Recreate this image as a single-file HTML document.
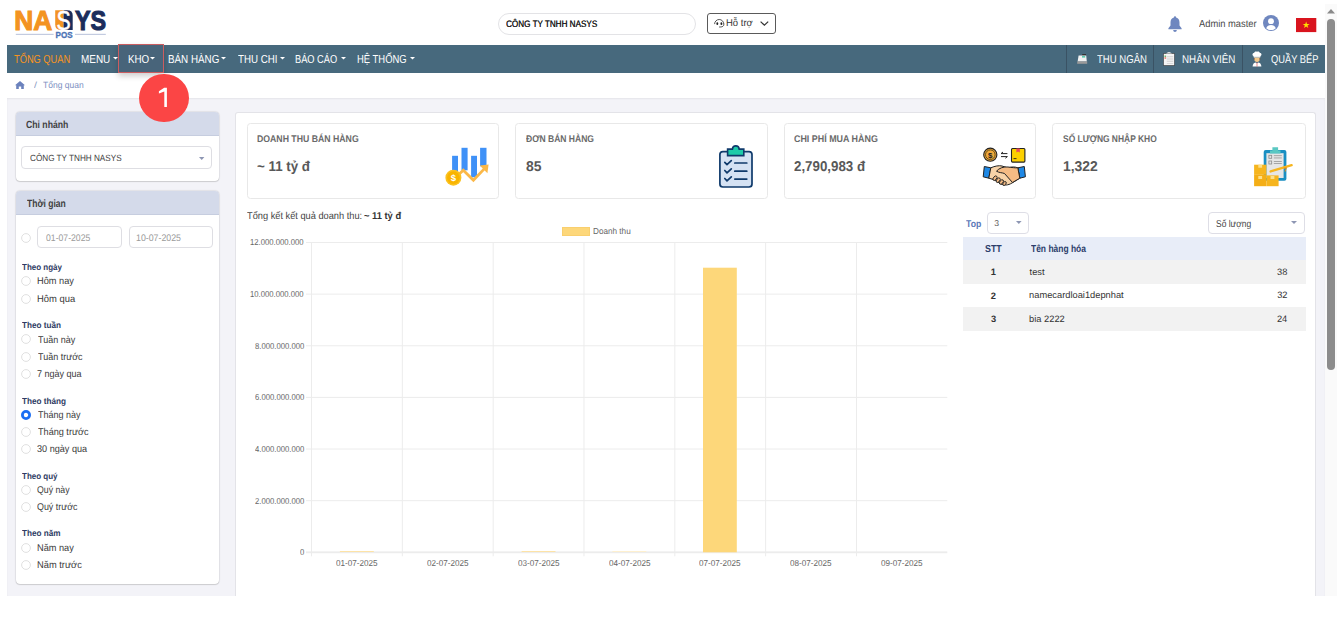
<!DOCTYPE html>
<html><head><meta charset="utf-8"><style>
html,body{margin:0;padding:0;}
body{width:1341px;height:625px;overflow:hidden;position:relative;background:#fff;font-family:"Liberation Sans",sans-serif;}
.t{position:absolute;white-space:nowrap;line-height:1;transform-origin:0 0;text-rendering:geometricPrecision;}
.r{position:absolute;box-sizing:border-box;}
svg{position:absolute;overflow:visible;}
</style></head><body>
<div class="r" style="left:7.00px;top:98.00px;width:1318.00px;height:498.00px;background:#f3f3f8;box-shadow:inset 0 1px 2px rgba(0,0,0,0.06)"></div>
<div class="r" style="left:7.00px;top:45.00px;width:1318.00px;height:28.00px;background:#47697d"></div>
<div class="r" style="left:1325.00px;top:4.00px;width:12.00px;height:592.00px;background:#fafafa"></div>
<svg style="left:1327px;top:8.6px" width="8" height="5"><path d="M0 4.5 L4 0 L8 4.5Z" fill="#8a8a8a"/></svg>
<div class="r" style="left:1327.00px;top:18.50px;width:8.00px;height:351.50px;background:#8c8c8c;border-radius:4px"></div>
<svg style="left:0;top:0" width="120" height="42">
<text x="14.2" y="29.9" font-family="Liberation Sans" font-weight="700" font-size="28.3" fill="#f39322" stroke="#f39322" stroke-width="1.1" textLength="38" lengthAdjust="spacingAndGlyphs">NA</text>
<path d="M55.2 10.2 H63.6 V30 H60.6 Q55.2 30 55.2 24.6 Z" fill="#f39322"/>
<path d="M63.6 10.2 H67.3 Q72.7 10.2 72.7 15.6 V30 H63.6 Z" fill="#1b2d5c"/>
<text x="56.6" y="29.9" font-family="Liberation Sans" font-weight="400" font-size="27.8" fill="#fff" stroke="#fff" stroke-width="0.5" textLength="14.2" lengthAdjust="spacingAndGlyphs">S</text>
<text x="74.9" y="29.9" font-family="Liberation Sans" font-weight="700" font-size="28.3" fill="#1b2d5c" stroke="#1b2d5c" stroke-width="1.1" textLength="31.2" lengthAdjust="spacingAndGlyphs">YS</text>
<rect x="15.8" y="33.8" width="37.8" height="1.2" fill="#c3cbe0"/>
<rect x="75" y="33.8" width="30.8" height="1.2" fill="#c3cbe0"/>
<text x="55.6" y="38.1" font-family="Liberation Sans" font-weight="700" font-size="8.6" fill="#4a72b5" stroke="#4a72b5" stroke-width="0.3" textLength="17" lengthAdjust="spacingAndGlyphs">POS</text>
</svg>
<div class="r" style="left:498.00px;top:13.30px;width:198.40px;height:21.30px;border:1px solid #e3e3e6;border-radius:11px;background:#fff"></div>
<div class="t" style="left:506.09px;top:19px;font-size:9.40px;font-weight:400;color:#1e1e1e;transform:scaleX(0.8660);text-shadow:0.2px 0 0 #1e1e1e;">CÔNG TY TNHH NASYS</div>
<div class="r" style="left:707.00px;top:13.00px;width:68.80px;height:20.50px;border:1.3px solid #5a5a5a;border-radius:3px;background:#fff"></div>
<svg style="left:713px;top:16.5px" width="13" height="12" viewBox="713 16.5 13 12">
<path d="M714.6 23.6 A4.6 4.6 0 1 1 723.8 23.6" fill="none" stroke="#444" stroke-width="0.9"/>
<ellipse cx="717.3" cy="23.2" rx="0.95" ry="1.35" fill="#222"/>
<ellipse cx="721.4" cy="23.2" rx="0.95" ry="1.35" fill="#222"/>
<path d="M723.8 23.3 C723.9 25.6 723 26.5 719.2 26.5" fill="none" stroke="#333" stroke-width="0.9"/>
</svg>
<div class="t" style="left:726.24px;top:19px;font-size:10.00px;font-weight:400;color:#333;transform:scaleX(0.9483);">Hỗ trợ</div>
<svg style="left:759.5px;top:20.8px" width="9" height="5"><path d="M0.6 0.6 L4.4 4.2 L8.2 0.6" fill="none" stroke="#333" stroke-width="1.2"/></svg>
<svg style="left:1168px;top:15.8px" width="14" height="16" viewBox="0 0 14 16">
<path d="M7 0.3 C7.8 0.3 8.1 0.9 8.1 1.5 C10.5 2.1 11.5 4 11.5 6.5 L11.5 9.5 L13.6 12.3 L13.6 13.2 L0.4 13.2 L0.4 12.3 L2.5 9.5 L2.5 6.5 C2.5 4 3.5 2.1 5.9 1.5 C5.9 0.9 6.2 0.3 7 0.3Z M5.2 14 L8.8 14 C8.8 15.1 8 16 7 16 C6 16 5.2 15.1 5.2 14Z" fill="#6f87bf"/>
</svg>
<div class="t" style="left:1198.80px;top:20px;font-size:10.15px;font-weight:400;color:#4a4a4a;transform:scaleX(0.9227);">Admin master</div>
<svg style="left:1262.6px;top:15.4px" width="16" height="16" viewBox="0 0 16 16">
<circle cx="8" cy="8" r="8" fill="#6f87bf"/>
<circle cx="8" cy="6.2" r="2.9" fill="#fff"/>
<path d="M3.2 13.2 C4 10.8 5.8 10 8 10 C10.2 10 12 10.8 12.8 13.2 C11.5 14.5 9.8 15 8 15 C6.2 15 4.5 14.5 3.2 13.2Z" fill="#fff"/>
</svg>
<svg style="left:1295.8px;top:17.8px" width="20.3" height="14.1" viewBox="0 0 20.3 14.1">
<rect width="20.3" height="14.1" fill="#d9141e"/>
<path d="M10.15 3.6 L11 6.1 L13.6 6.1 L11.5 7.6 L12.3 10.1 L10.15 8.6 L8 10.1 L8.8 7.6 L6.7 6.1 L9.3 6.1Z" fill="#ffde00"/>
</svg>
<div class="r" style="left:117.90px;top:43.60px;width:45.70px;height:29.90px;background:#48647a;border:1px solid rgba(226,92,92,0.85);box-shadow:0 3px 6px rgba(0,0,0,0.2)"></div>
<div class="t" style="left:13.71px;top:54px;font-size:11.64px;font-weight:400;color:#f7941d;transform:scaleX(0.7978);">TỔNG QUAN</div>
<div class="t" style="left:80.50px;top:54px;font-size:11.64px;font-weight:400;color:#ffffff;transform:scaleX(0.8545);">MENU</div>
<svg style="left:113px;top:57.4px" width="5" height="2.5"><path d="M0 0 L5 0 L2.5 2.5Z" fill="#fff"/></svg>
<div class="t" style="left:127.92px;top:54px;font-size:11.64px;font-weight:400;color:#ffffff;transform:scaleX(0.8423);">KHO</div>
<svg style="left:150.2px;top:57.4px" width="5" height="2.5"><path d="M0 0 L5 0 L2.5 2.5Z" fill="#fff"/></svg>
<div class="t" style="left:167.71px;top:54px;font-size:11.64px;font-weight:400;color:#ffffff;transform:scaleX(0.8456);">BÁN HÀNG</div>
<svg style="left:221.4px;top:57.4px" width="5" height="2.5"><path d="M0 0 L5 0 L2.5 2.5Z" fill="#fff"/></svg>
<div class="t" style="left:237.81px;top:54px;font-size:11.64px;font-weight:400;color:#ffffff;transform:scaleX(0.8373);">THU CHI</div>
<svg style="left:280.2px;top:57.4px" width="5" height="2.5"><path d="M0 0 L5 0 L2.5 2.5Z" fill="#fff"/></svg>
<div class="t" style="left:295.26px;top:54px;font-size:11.64px;font-weight:400;color:#ffffff;transform:scaleX(0.7951);">BÁO CÁO</div>
<svg style="left:341.2px;top:57.4px" width="5" height="2.5"><path d="M0 0 L5 0 L2.5 2.5Z" fill="#fff"/></svg>
<div class="t" style="left:356.54px;top:54px;font-size:11.64px;font-weight:400;color:#ffffff;transform:scaleX(0.8128);">HỆ THỐNG</div>
<svg style="left:410.2px;top:57.4px" width="5" height="2.5"><path d="M0 0 L5 0 L2.5 2.5Z" fill="#fff"/></svg>
<div class="r" style="left:1066.00px;top:45.00px;width:1.20px;height:28.00px;background:#3a5264"></div>
<div class="r" style="left:1153.00px;top:45.00px;width:1.20px;height:28.00px;background:#3a5264"></div>
<div class="r" style="left:1242.00px;top:45.00px;width:1.20px;height:28.00px;background:#3a5264"></div>
<svg style="left:1077px;top:54px" width="10.5" height="10" viewBox="0 0 10.5 10">
<rect x="5.2" y="0" width="3.8" height="1.6" fill="#333"/>
<path d="M1.6 1.4 L9.2 1.4 L9.8 7.4 L0.6 7.4Z" fill="#f2f2f2"/>
<rect x="5" y="2.2" width="3.2" height="1.3" fill="#3cc2a0"/>
<rect x="0.2" y="7.4" width="10" height="2.4" fill="#9a9a9a"/>
</svg>
<div class="t" style="left:1096.81px;top:55px;font-size:11.34px;font-weight:400;color:#ffffff;transform:scaleX(0.8439);">THU NGÂN</div>
<svg style="left:1162.5px;top:51.4px" width="12" height="15" viewBox="0 0 12 15">
<path d="M0.3 2.2 L11.7 2.2 L11.7 14.8 L0.3 14.8Z" fill="#3c3c3c"/>
<path d="M0.8 2.8 L11.2 2.8 L11.2 14.2 L0.8 14.2Z" fill="#f4f4f4"/>
<path d="M3 2.6 Q6 -0.6 9 2.6Z" fill="#e8e8e8"/>
<rect x="1.5" y="4.6" width="1.6" height="1.2" fill="#4caf50"/>
<rect x="1.5" y="6.4" width="1.6" height="1.2" fill="#e74c3c"/>
<g fill="#c8c8c8"><rect x="3.8" y="5" width="6.4" height="0.6"/><rect x="3.8" y="6.8" width="6.4" height="0.6"/><rect x="3.8" y="8.6" width="6.4" height="0.6"/><rect x="3.8" y="10.4" width="6.4" height="0.6"/><rect x="3.8" y="12.2" width="6.4" height="0.6"/></g>
</svg>
<div class="t" style="left:1182.42px;top:55px;font-size:11.34px;font-weight:400;color:#ffffff;transform:scaleX(0.8643);">NHÂN VIÊN</div>
<svg style="left:1251.8px;top:51.2px" width="10" height="16" viewBox="0 0 10 16">
<path d="M1.5 5 C0 4.5 0.2 2 2 2 C2.5 0.3 4 0 5 0.8 C6 0 7.5 0.3 8 2 C9.8 2 10 4.5 8.5 5 L8.3 6 L1.7 6Z" fill="#fff"/>
<rect x="1.8" y="5.6" width="6.4" height="1.1" fill="#ddd"/>
<path d="M2.3 6.7 L7.7 6.7 L7.7 8.6 C7.7 10.2 6.5 11 5 11 C3.5 11 2.3 10.2 2.3 8.6Z" fill="#f3c98b"/>
<path d="M1.8 7 L2.4 7 L2.4 9 L1.8 8.5Z M8.2 7 L7.6 7 L7.6 9 L8.2 8.5Z" fill="#8b4a2b"/>
<path d="M0.6 15.6 C0.6 12.8 2.2 11.6 4 11.4 L5 12.4 L6 11.4 C7.8 11.6 9.4 12.8 9.4 15.6Z" fill="#fff"/>
<rect x="4.7" y="11.6" width="0.6" height="4" fill="#d44"/>
</svg>
<div class="t" style="left:1270.98px;top:55px;font-size:11.34px;font-weight:400;color:#ffffff;transform:scaleX(0.8219);">QUẦY BẾP</div>
<svg style="left:15px;top:81px" width="10" height="8" viewBox="0 0 10 8">
<path d="M5 0 L10 4.3 L8.8 4.3 L8.8 8 L6.2 8 L6.2 5.6 L3.8 5.6 L3.8 8 L1.2 8 L1.2 4.3 L0 4.3Z" fill="#6b82bd"/>
</svg>
<div class="t" style="left:33.70px;top:81px;font-size:8.96px;font-weight:400;color:#8e9bc0;transform:scaleX(1.1958);">/</div>
<div class="t" style="left:42.83px;top:81px;font-size:8.96px;font-weight:400;color:#7d90c2;transform:scaleX(0.9485);">Tổng quan</div>
<div class="r" style="left:15.70px;top:112.00px;width:202.90px;height:68.50px;background:#fff;border-radius:4px;box-shadow:0 0 1.5px rgba(0,0,0,0.32),0 1px 1px rgba(0,0,0,0.1)"></div>
<div class="r" style="left:15.70px;top:112.00px;width:202.90px;height:24.40px;background:#d4daea;border-radius:4px 4px 0 0;border-bottom:1px solid #c6cddf"></div>
<div class="t" style="left:26.35px;top:121px;font-size:10.30px;font-weight:700;color:#3f3f3f;transform:scaleX(0.8420);">Chi nhánh</div>
<div class="r" style="left:21.40px;top:146.30px;width:191.10px;height:23.00px;border:1px solid #dedee3;border-radius:4px;background:#fff"></div>
<div class="t" style="left:29.59px;top:154px;font-size:9.03px;font-weight:400;color:#444;transform:scaleX(0.9054);">CÔNG TY TNHH NASYS</div>
<svg style="left:198.6px;top:157px" width="5.4" height="3"><path d="M0 0 L5.4 0 L2.7 3Z" fill="#8d96b3"/></svg>
<div class="r" style="left:15.70px;top:191.20px;width:202.90px;height:393.30px;background:#fff;border-radius:4px;box-shadow:0 0 1.5px rgba(0,0,0,0.32),0 1px 1px rgba(0,0,0,0.1)"></div>
<div class="r" style="left:15.70px;top:191.20px;width:202.90px;height:23.60px;background:#d4daea;border-radius:4px 4px 0 0;border-bottom:1px solid #c6cddf"></div>
<div class="t" style="left:27.11px;top:199px;font-size:10.60px;font-weight:700;color:#3f3f3f;transform:scaleX(0.8053);">Thời gian</div>
<svg style="left:21px;top:232.50px" width="10" height="10"><circle cx="5" cy="5" r="4.4" fill="#fff" stroke="#dcdcdc" stroke-width="0.9"/></svg>
<div class="r" style="left:37.40px;top:226.10px;width:84.20px;height:22.40px;border:1px solid #dedee3;border-radius:4px;background:#fff"></div>
<div class="r" style="left:128.50px;top:226.10px;width:84.20px;height:22.40px;border:1px solid #dedee3;border-radius:4px;background:#fff"></div>
<div class="t" style="left:45.65px;top:234px;font-size:9.55px;font-weight:400;color:#9a9a9a;transform:scaleX(0.9067);">01-07-2025</div>
<div class="t" style="left:136.34px;top:234px;font-size:9.55px;font-weight:400;color:#9a9a9a;transform:scaleX(0.9215);">10-07-2025</div>
<div class="t" style="left:21.62px;top:263px;font-size:8.66px;font-weight:700;color:#2e3b63;transform:scaleX(0.9243);">Theo ngày</div>
<svg style="left:21px;top:276.00px" width="10" height="10"><circle cx="5" cy="5" r="4.4" fill="#fff" stroke="#dcdcdc" stroke-width="0.9"/></svg>
<div class="t" style="left:37.06px;top:277px;font-size:9.85px;font-weight:400;color:#3a3a3a;transform:scaleX(0.9375);">Hôm nay</div>
<svg style="left:21px;top:293.80px" width="10" height="10"><circle cx="5" cy="5" r="4.4" fill="#fff" stroke="#dcdcdc" stroke-width="0.9"/></svg>
<div class="t" style="left:37.05px;top:295px;font-size:9.85px;font-weight:400;color:#3a3a3a;transform:scaleX(0.9552);">Hôm qua</div>
<div class="t" style="left:21.62px;top:321px;font-size:8.66px;font-weight:700;color:#2e3b63;transform:scaleX(0.9400);">Theo tuần</div>
<svg style="left:21px;top:334.30px" width="10" height="10"><circle cx="5" cy="5" r="4.4" fill="#fff" stroke="#dcdcdc" stroke-width="0.9"/></svg>
<div class="t" style="left:37.62px;top:336px;font-size:9.85px;font-weight:400;color:#3a3a3a;transform:scaleX(0.9140);">Tuần này</div>
<svg style="left:21px;top:351.80px" width="10" height="10"><circle cx="5" cy="5" r="4.4" fill="#fff" stroke="#dcdcdc" stroke-width="0.9"/></svg>
<div class="t" style="left:37.62px;top:353px;font-size:9.85px;font-weight:400;color:#3a3a3a;transform:scaleX(0.9139);">Tuần trước</div>
<svg style="left:21px;top:369.10px" width="10" height="10"><circle cx="5" cy="5" r="4.4" fill="#fff" stroke="#dcdcdc" stroke-width="0.9"/></svg>
<div class="t" style="left:37.35px;top:370px;font-size:9.85px;font-weight:400;color:#3a3a3a;transform:scaleX(0.9158);">7 ngày qua</div>
<div class="t" style="left:21.62px;top:397px;font-size:8.66px;font-weight:700;color:#2e3b63;transform:scaleX(0.9451);">Theo tháng</div>
<svg style="left:21px;top:410.00px" width="10" height="10"><circle cx="5" cy="5" r="3.6" fill="#fff" stroke="#1b6ef3" stroke-width="2.8"/></svg>
<div class="t" style="left:37.62px;top:411px;font-size:9.85px;font-weight:400;color:#3a3a3a;transform:scaleX(0.9127);">Tháng này</div>
<svg style="left:21px;top:427.00px" width="10" height="10"><circle cx="5" cy="5" r="4.4" fill="#fff" stroke="#dcdcdc" stroke-width="0.9"/></svg>
<div class="t" style="left:37.62px;top:428px;font-size:9.85px;font-weight:400;color:#3a3a3a;transform:scaleX(0.9258);">Tháng trước</div>
<svg style="left:21px;top:443.80px" width="10" height="10"><circle cx="5" cy="5" r="4.4" fill="#fff" stroke="#dcdcdc" stroke-width="0.9"/></svg>
<div class="t" style="left:37.44px;top:445px;font-size:9.85px;font-weight:400;color:#3a3a3a;transform:scaleX(0.9251);">30 ngày qua</div>
<div class="t" style="left:21.62px;top:472px;font-size:8.66px;font-weight:700;color:#2e3b63;transform:scaleX(0.9227);">Theo quý</div>
<svg style="left:21px;top:484.70px" width="10" height="10"><circle cx="5" cy="5" r="4.4" fill="#fff" stroke="#dcdcdc" stroke-width="0.9"/></svg>
<div class="t" style="left:37.41px;top:486px;font-size:9.85px;font-weight:400;color:#3a3a3a;transform:scaleX(0.8883);">Quý này</div>
<svg style="left:21px;top:502.00px" width="10" height="10"><circle cx="5" cy="5" r="4.4" fill="#fff" stroke="#dcdcdc" stroke-width="0.9"/></svg>
<div class="t" style="left:37.40px;top:503px;font-size:9.85px;font-weight:400;color:#3a3a3a;transform:scaleX(0.9042);">Quý trước</div>
<div class="t" style="left:21.62px;top:529px;font-size:8.66px;font-weight:700;color:#2e3b63;transform:scaleX(0.9426);">Theo năm</div>
<svg style="left:21px;top:542.50px" width="10" height="10"><circle cx="5" cy="5" r="4.4" fill="#fff" stroke="#dcdcdc" stroke-width="0.9"/></svg>
<div class="t" style="left:37.06px;top:544px;font-size:9.85px;font-weight:400;color:#3a3a3a;transform:scaleX(0.9349);">Năm nay</div>
<svg style="left:21px;top:559.80px" width="10" height="10"><circle cx="5" cy="5" r="4.4" fill="#fff" stroke="#dcdcdc" stroke-width="0.9"/></svg>
<div class="t" style="left:37.06px;top:561px;font-size:9.85px;font-weight:400;color:#3a3a3a;transform:scaleX(0.9442);">Năm trước</div>
<div class="r" style="left:235.00px;top:112.00px;width:1081.00px;height:484.00px;background:#fff;border:1px solid #e3e3e8;border-bottom:none;border-radius:3px 3px 0 0"></div>
<div class="r" style="left:247.00px;top:123.00px;width:252.00px;height:76.00px;border:1px solid #e8e8e8;border-radius:3.5px;background:#fff"></div>
<div class="t" style="left:256.53px;top:135px;font-size:9.70px;font-weight:700;color:#6a6a6a;transform:scaleX(0.8996);">DOANH THU BÁN HÀNG</div>
<div class="t" style="left:256.57px;top:160px;font-size:14.18px;font-weight:700;color:#585858;transform:scaleX(0.9403);">~ 11 tỷ đ</div>
<div class="r" style="left:515.00px;top:123.00px;width:253.00px;height:76.00px;border:1px solid #e8e8e8;border-radius:3.5px;background:#fff"></div>
<div class="t" style="left:526.06px;top:135px;font-size:9.70px;font-weight:700;color:#6a6a6a;transform:scaleX(0.8814);">ĐƠN BÁN HÀNG</div>
<div class="t" style="left:525.68px;top:160px;font-size:14.18px;font-weight:700;color:#585858;transform:scaleX(0.9826);">85</div>
<div class="r" style="left:784.00px;top:123.00px;width:252.00px;height:76.00px;border:1px solid #e8e8e8;border-radius:3.5px;background:#fff"></div>
<div class="t" style="left:794.34px;top:135px;font-size:9.70px;font-weight:700;color:#6a6a6a;transform:scaleX(0.9196);">CHI PHÍ MUA HÀNG</div>
<div class="t" style="left:794.23px;top:160px;font-size:14.18px;font-weight:700;color:#585858;transform:scaleX(0.9390);">2,790,983 đ</div>
<div class="r" style="left:1052.00px;top:123.00px;width:254.00px;height:76.00px;border:1px solid #e8e8e8;border-radius:3.5px;background:#fff"></div>
<div class="t" style="left:1063.35px;top:135px;font-size:9.70px;font-weight:700;color:#6a6a6a;transform:scaleX(0.8707);">SỐ LƯỢNG NHẬP KHO</div>
<div class="t" style="left:1062.76px;top:160px;font-size:14.18px;font-weight:700;color:#585858;transform:scaleX(0.9814);">1,322</div>
<div class="t" style="left:246.82px;top:212px;font-size:10.00px;font-weight:400;color:#444;transform:scaleX(0.9246);">Tổng kết kết quả doanh thu:</div>
<div class="t" style="left:363.63px;top:212px;font-size:10.00px;font-weight:700;color:#333;transform:scaleX(0.9338);">~ 11 tỷ đ</div>
<div class="r" style="left:562.40px;top:227.30px;width:27.50px;height:8.60px;background:#fdd77a;border:1px solid #f9cf6e"></div>
<div class="t" style="left:593.15px;top:227px;font-size:8.66px;font-weight:400;color:#666;transform:scaleX(0.9429);">Doanh thu</div>
<svg style="left:0;top:0" width="1341" height="625"><rect x="306" y="242.00" width="641.30" height="1" fill="#ececec"/><rect x="306" y="293.63" width="641.30" height="1" fill="#ececec"/><rect x="306" y="345.27" width="641.30" height="1" fill="#ececec"/><rect x="306" y="396.90" width="641.30" height="1" fill="#ececec"/><rect x="306" y="448.53" width="641.30" height="1" fill="#ececec"/><rect x="306" y="500.17" width="641.30" height="1" fill="#ececec"/><rect x="306" y="551.40" width="641.30" height="1.8" fill="#ececec"/><rect x="311.00" y="242.00" width="1" height="314.30" fill="#ececec"/><rect x="401.83" y="242.00" width="1" height="314.30" fill="#ececec"/><rect x="492.66" y="242.00" width="1" height="314.30" fill="#ececec"/><rect x="583.49" y="242.00" width="1" height="314.30" fill="#ececec"/><rect x="674.31" y="242.00" width="1" height="314.30" fill="#ececec"/><rect x="765.14" y="242.00" width="1" height="314.30" fill="#ececec"/><rect x="855.97" y="242.00" width="1" height="314.30" fill="#ececec"/><rect x="703" y="267.7" width="33.8" height="284.60" fill="#fdd77a"/><rect x="339.9" y="551.00" width="33.9" height="1" fill="#fde3a7"/><rect x="521.6" y="551.00" width="33.9" height="1" fill="#fde3a7"/><rect x="612.4" y="551.00" width="33.9" height="1" fill="#fef0cf"/></svg>
<div class="t" style="left:250.40px;top:238px;font-size:8.66px;font-weight:400;color:#666;transform:scaleX(0.8901);">12.000.000.000</div>
<div class="t" style="left:250.40px;top:290px;font-size:8.66px;font-weight:400;color:#666;transform:scaleX(0.8901);">10.000.000.000</div>
<div class="t" style="left:254.68px;top:342px;font-size:8.66px;font-weight:400;color:#666;transform:scaleX(0.8901);">8.000.000.000</div>
<div class="t" style="left:254.68px;top:393px;font-size:8.66px;font-weight:400;color:#666;transform:scaleX(0.8901);">6.000.000.000</div>
<div class="t" style="left:254.68px;top:445px;font-size:8.66px;font-weight:400;color:#666;transform:scaleX(0.8901);">4.000.000.000</div>
<div class="t" style="left:254.68px;top:497px;font-size:8.66px;font-weight:400;color:#666;transform:scaleX(0.8901);">2.000.000.000</div>
<div class="t" style="left:299.69px;top:548px;font-size:8.66px;font-weight:400;color:#666;transform:scaleX(0.8901);">0</div>
<div class="t" style="left:336.09px;top:559px;font-size:8.66px;font-weight:400;color:#666;transform:scaleX(0.9403);">01-07-2025</div>
<div class="t" style="left:426.92px;top:559px;font-size:8.66px;font-weight:400;color:#666;transform:scaleX(0.9403);">02-07-2025</div>
<div class="t" style="left:517.75px;top:559px;font-size:8.66px;font-weight:400;color:#666;transform:scaleX(0.9403);">03-07-2025</div>
<div class="t" style="left:608.57px;top:559px;font-size:8.66px;font-weight:400;color:#666;transform:scaleX(0.9403);">04-07-2025</div>
<div class="t" style="left:699.40px;top:559px;font-size:8.66px;font-weight:400;color:#666;transform:scaleX(0.9403);">07-07-2025</div>
<div class="t" style="left:790.23px;top:559px;font-size:8.66px;font-weight:400;color:#666;transform:scaleX(0.9403);">08-07-2025</div>
<div class="t" style="left:881.06px;top:559px;font-size:8.66px;font-weight:400;color:#666;transform:scaleX(0.9403);">09-07-2025</div>
<div class="t" style="left:966.11px;top:220px;font-size:9.85px;font-weight:700;color:#5a78b8;transform:scaleX(0.8787);">Top</div>
<div class="r" style="left:986.80px;top:212.20px;width:42.70px;height:22.30px;border:1px solid #dedee6;border-radius:4px;background:#fff"></div>
<div class="t" style="left:994.26px;top:219px;font-size:8.60px;font-weight:400;color:#555;">3</div>
<svg style="left:1015.5px;top:221.4px" width="5.6" height="3"><path d="M0 0 L5.6 0 L2.8 3Z" fill="#8d96b3"/></svg>
<div class="r" style="left:1207.60px;top:212.20px;width:97.80px;height:22.30px;border:1px solid #dedee6;border-radius:4px;background:#fff"></div>
<div class="t" style="left:1216.02px;top:220px;font-size:9.85px;font-weight:400;color:#444;transform:scaleX(0.8573);">Số lượng</div>
<svg style="left:1290.6px;top:221.4px" width="6" height="3"><path d="M0 0 L6 0 L3 3Z" fill="#8d96b3"/></svg>
<div class="r" style="left:963.10px;top:237.00px;width:342.70px;height:22.60px;background:#e8edf8"></div>
<div class="r" style="left:963.10px;top:259.60px;width:342.70px;height:24.00px;background:#f2f2f2"></div>
<div class="r" style="left:963.10px;top:306.80px;width:342.70px;height:23.80px;background:#f2f2f2"></div>
<div class="t" style="left:985.13px;top:245px;font-size:10.15px;font-weight:700;color:#2c3d6b;transform:scaleX(0.8734);">STT</div>
<div class="t" style="left:1030.92px;top:245px;font-size:10.15px;font-weight:700;color:#2c3d6b;transform:scaleX(0.8352);">Tên hàng hóa</div>
<div class="t" style="left:990.64px;top:268px;font-size:9.30px;font-weight:700;color:#333;">1</div>
<div class="t" style="left:1029.56px;top:268px;font-size:9.30px;font-weight:400;color:#333;">test</div>
<div class="t" style="left:1277.05px;top:268px;font-size:9.30px;font-weight:400;color:#333;">38</div>
<div class="t" style="left:990.87px;top:292px;font-size:9.30px;font-weight:700;color:#333;">2</div>
<div class="t" style="left:1029.10px;top:291px;font-size:9.30px;font-weight:400;color:#333;">namecardloai1depnhat</div>
<div class="t" style="left:1277.14px;top:291px;font-size:9.30px;font-weight:400;color:#333;">32</div>
<div class="t" style="left:990.97px;top:315px;font-size:9.30px;font-weight:700;color:#333;">3</div>
<div class="t" style="left:1029.10px;top:315px;font-size:9.30px;font-weight:400;color:#333;">bia 2222</div>
<div class="t" style="left:1276.96px;top:315px;font-size:9.30px;font-weight:400;color:#333;">24</div>
<svg style="left:440px;top:142px" width="54" height="48" viewBox="440 142 54 48">
<g fill="#3f91f7">
<rect x="452.1" y="155.8" width="5.9" height="20"/>
<rect x="461.5" y="147.8" width="6.1" height="22.5"/>
<rect x="471.1" y="155.8" width="5.9" height="21.5"/>
<rect x="480.1" y="147.8" width="6.4" height="18.5"/>
</g>
<path d="M455 178 L463.3 170.2 L473.4 180.2 L484.5 168.6" fill="none" stroke="#fbb848" stroke-width="2.8" stroke-linejoin="miter"/>
<path d="M479.8 165.6 L488.6 164.6 L487.4 173.2Z" fill="#fbb848"/>
<circle cx="453.4" cy="177.7" r="8" fill="#fbc21f"/>
<circle cx="453.4" cy="177.7" r="6.4" fill="#f9b400"/>
<text x="453.4" y="181.2" font-family="Liberation Sans" font-weight="700" font-size="9.5" fill="#fff" text-anchor="middle">$</text>
</svg>
<svg style="left:712px;top:140px" width="48" height="52" viewBox="712 140 48 52">
<rect x="719.9" y="151.6" width="32.1" height="35.4" rx="3" fill="#d5e2f3" stroke="#0f3a6b" stroke-width="1.7"/>
<path d="M727.6 149.1 L732.4 149.1 C732.6 146.9 734 145.9 735.8 145.9 C737.6 145.9 739 146.9 739.2 149.1 L743.8 149.1 L743.8 155.6 L727.6 155.6Z" fill="#1ecba9" stroke="#0f3a6b" stroke-width="1.6"/>
<g fill="none" stroke="#0f3a6b" stroke-width="1.7" stroke-linecap="round" stroke-linejoin="round">
<path d="M724.8 162.3 L727 164.6 L731.3 160.6"/><path d="M724.8 170.5 L727 172.8 L731.3 168.8"/><path d="M724.8 178.5 L727 180.8 L731.3 176.8"/>
<path d="M734.8 163 L746.8 163"/><path d="M734.8 171.2 L746.8 171.2"/><path d="M734.8 179.1 L746.8 179.1"/>
</g>
</svg>
<svg style="left:978px;top:142px" width="52" height="48" viewBox="978 142 52 48">
<circle cx="990.3" cy="154.7" r="6.6" fill="#e9a23b" stroke="#222" stroke-width="1.1"/>
<circle cx="990.3" cy="154.7" r="4.8" fill="#f2a93b" stroke="#5a4a12" stroke-width="0.9"/>
<text x="990.3" y="157.7" font-family="Liberation Sans" font-weight="700" font-size="8" fill="#222" text-anchor="middle">$</text>
<path d="M1001 153.6 L1007.4 153.6 M1001 156.6 L1007.4 156.6" stroke="#222" stroke-width="1"/>
<path d="M1001 153.6 L1003 152 M1007.4 156.6 L1005.4 158.2" stroke="#222" stroke-width="1"/>
<rect x="1011.5" y="148.5" width="13.4" height="13.6" rx="1" fill="#fcd000" stroke="#222" stroke-width="1.1"/>
<path d="M1016.4 148.6 L1019.8 148.6 L1019.8 152.4 L1018.1 151.4 L1016.4 152.4Z" fill="#e84a5f"/>
<rect x="1013.5" y="158.2" width="3" height="0.9" fill="#222"/>
<path d="M984.3 166.5 L990.8 167.8 L988.8 178.2 L983.2 176.8Z" fill="#1e88e5" stroke="#222" stroke-width="1"/>
<path d="M1017.8 167.8 L1024.3 166.5 L1025.4 176.8 L1019.8 178.2Z" fill="#1e88e5" stroke="#222" stroke-width="1"/>
<path d="M990.8 167.8 C995 166 999 165.3 1002 166 L1008 168 C1012 166.5 1015 166.8 1017.8 167.8 L1019.8 178.2 L1012 183 C1008 185.5 1004 185.5 1001 184 L995 180 L988.8 178.2Z" fill="#f8d3a8" stroke="#222" stroke-width="1"/>
<path d="M996.5 171.2 C999 168 1004 166.5 1008 167 C1012 167.5 1015 168 1017.8 167.8 L1019.8 178.2 L1012.5 182.5 L1004.5 173.5 C1002 172.5 999.5 173 996.5 171.2Z" fill="#f5bb84" stroke="#222" stroke-width="1"/>
<g fill="#f5bb84" stroke="#222" stroke-width="0.9">
<ellipse cx="995" cy="178.2" rx="1.6" ry="2.6" transform="rotate(40 995 178.2)"/>
<ellipse cx="998.2" cy="180.2" rx="1.6" ry="2.6" transform="rotate(40 998.2 180.2)"/>
<ellipse cx="1001.4" cy="182" rx="1.6" ry="2.6" transform="rotate(40 1001.4 182)"/>
<ellipse cx="1004.5" cy="183.5" rx="1.4" ry="2.2" transform="rotate(40 1004.5 183.5)"/>
</g>
</svg>
<svg style="left:1248px;top:142px" width="48" height="48" viewBox="1248 142 48 48">
<rect x="1263.7" y="150" width="22.7" height="30.8" rx="2" fill="#1b8fc2"/>
<rect x="1266.4" y="153.2" width="17.2" height="24.8" fill="#e6e6e6"/>
<path d="M1270 150.6 L1272.4 150.6 L1272.4 147.3 L1278.1 147.3 L1278.1 150.6 L1280.5 150.6 L1280.5 153.4 L1270 153.4Z" fill="#5ac8c2"/>
<g fill="none" stroke="#8a8a8a" stroke-width="0.8"><rect x="1268.9" y="155.3" width="2.8" height="3"/><rect x="1268.9" y="161" width="2.8" height="3"/></g>
<g fill="#8a8a8a"><rect x="1273.8" y="155.4" width="8" height="0.7"/><rect x="1273.8" y="157.6" width="8" height="0.7"/><rect x="1273.8" y="161.1" width="8" height="0.7"/><rect x="1273.8" y="163.3" width="8" height="0.7"/></g>
<rect x="1254.1" y="164.7" width="12.3" height="10" fill="#f6b51e"/>
<rect x="1254.1" y="174.5" width="12.3" height="11.7" fill="#f4ae16"/>
<rect x="1266.4" y="175.4" width="12.2" height="10.8" fill="#f6b51e"/>
<g fill="#fde08a"><rect x="1258.3" y="164.7" width="3.8" height="3"/><rect x="1258.3" y="176" width="3.8" height="3"/><rect x="1270.6" y="176" width="3.8" height="3"/></g>
<path d="M1270.6 171.4 L1291.6 165.2" stroke="#f6b51e" stroke-width="2.4" stroke-linecap="round"/>
<path d="M1283.6 168 L1286.5 167.8 L1285 171.6" fill="none" stroke="#f08c10" stroke-width="0.9"/>
</svg>
<div class="r" style="left:139.3px;top:73.6px;width:49.4px;height:48px;border-radius:50%;background:#fb4545"></div>
<svg style="left:0;top:0" width="200" height="130"><path d="M164.2 87.8 L166.9 87.8 L166.9 106.9 L164.3 106.9 L164.3 91.6 L158.9 93.5 L158.9 91.2 Z" fill="#fff"/></svg>
</body></html>
